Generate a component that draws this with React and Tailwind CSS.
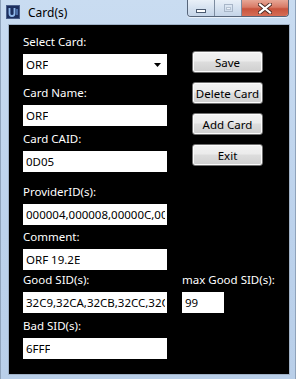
import React from 'react';

const font = "font-['Segoe_UI','Noto_Sans',sans-serif]";

function Field({ label, value, top, width = 'w-[144px]', children }) {
  return (
    <div className="flex flex-col" style={top ? { marginTop: top } : undefined}>
      <label className="h-[15px] text-[11.5px] leading-[15px] text-white whitespace-nowrap">{label}</label>
      <div className={`mt-[5px] h-[21px] ${width} bg-white flex items-center pl-[3px] pr-[2px] overflow-hidden`}>
        <span className="min-w-0 text-[11.5px] leading-[15px] text-black whitespace-nowrap overflow-hidden">{value}</span>
        {children}
      </div>
    </div>
  );
}

function WinButton({ label }) {
  return (
    <button className="w-[71px] h-[22px] rounded-[3px] border border-[#707070] bg-[linear-gradient(#f2f2f2_0%,#ebebeb_45%,#dddddd_50%,#cfcfcf_100%)] text-[11.5px] leading-[15px] text-black shadow-[inset_0_0_0_1px_#fcfcfc]">
      {label}
    </button>
  );
}

function AppIcon() {
  return (
    <svg width="14" height="14" viewBox="0 0 14 14">
      <rect x="0" y="0" width="14" height="14" fill="#1c2f5e" />
      <rect x="0.5" y="0.5" width="13" height="13" fill="none" stroke="#4a5f8a" />
      <path d="M3.5 3 V8.5 Q3.5 11 6 11 Q8.5 11 8.5 8.5 V3" fill="none" stroke="#8fb8ea" strokeWidth="1.8" />
      <path d="M11 4 V10" fill="none" stroke="#5d86c4" strokeWidth="1.4" />
    </svg>
  );
}

function CaptionButtons() {
  return (
    <div className="flex h-[17px] self-start rounded-b-[4px] border border-t-0 border-[#56657a] overflow-hidden shadow-[0_1px_0_#e8f0fa]">
      <div className="w-[27px] flex items-center justify-center border-r border-[#7d8ca0] bg-[linear-gradient(#e9f0f8_0%,#d6e2f0_50%,#c4d4e8_100%)]">
        <div className="w-[10px] h-[4px] mt-[5px] bg-white border border-[#4b5a70]" />
      </div>
      <div className="w-[27px] flex items-center justify-center border-r border-[#7d8ca0] bg-[linear-gradient(#e9f0f8_0%,#d6e2f0_50%,#c4d4e8_100%)]">
        <div className="w-[9px] h-[8px] border border-[#a8b6c8] flex items-center justify-center">
          <div className="w-[5px] h-[3px] border border-[#b6c3d3] bg-[#eef3f9]" />
        </div>
      </div>
      <div className="w-[46px] flex items-center justify-center bg-[linear-gradient(#e7a796_0%,#d87a66_45%,#c8533d_55%,#d66d56_100%)]">
        <svg width="14" height="11" viewBox="0 0 14 11">
          <path d="M2 1.5 L12 9.5 M12 1.5 L2 9.5" stroke="#4a2a24" strokeWidth="4" strokeLinecap="square" />
          <path d="M2 1.5 L12 9.5 M12 1.5 L2 9.5" stroke="#ffffff" strokeWidth="2.2" strokeLinecap="square" />
        </svg>
      </div>
    </div>
  );
}

export default function App() {
  return (
    <div className={`${font} w-[296px] h-[379px] bg-[linear-gradient(#c9dcf1_0%,#bcd2ec_60%,#b9cfe9_100%)] border-x border-[#8fa3bb] flex flex-col overflow-hidden`}>
      <div className="h-[24px] flex pl-[5px] pr-[6px]">
        <div className="flex items-center gap-[8px] h-[24px]">
          <AppIcon />
          <span className="text-[12px] leading-[15px] text-black">Card(s)</span>
        </div>
        <div className="ml-auto">
          <CaptionButtons />
        </div>
      </div>

      <div className="ml-[7px] w-[282px] h-[351px] bg-black border border-[#9fb1c6] pl-[14px]">
        <div className="flex">
          <div className="flex flex-col w-[144px]">
            <Field label="Select Card:" value="ORF" top={9}>
              <svg className="ml-auto mr-[4px] shrink-0" width="7" height="4" viewBox="0 0 7 4">
                <path d="M0 0 H7 L3.5 4 Z" fill="#000" />
              </svg>
            </Field>
            <Field label="Card Name:" value="ORF" top={10} />
            <Field label="Card CAID:" value="0D05" top={5} />
            <Field label="ProviderID(s):" value="000004,000008,00000C,000" top={12} />
            <Field label="Comment:" value="ORF 19.2E" top={4} />
          </div>
          <div className="ml-[25px] mt-[26px] flex flex-col gap-[9px]">
            <WinButton label="Save" />
            <WinButton label="Delete Card" />
            <WinButton label="Add Card" />
            <WinButton label="Exit" />
          </div>
        </div>

        <div className="flex">
          <div className="w-[144px]">
            <Field label="Good SID(s):" value="32C9,32CA,32CB,32CC,32CD" top={2} />
          </div>
          <div className="ml-[15px]">
            <Field label="max Good SID(s):" value="99" top={2} width="w-[42px]" />
          </div>
        </div>
        <Field label="Bad SID(s):" value="6FFF" top={5} />
      </div>
    </div>
  );
}
